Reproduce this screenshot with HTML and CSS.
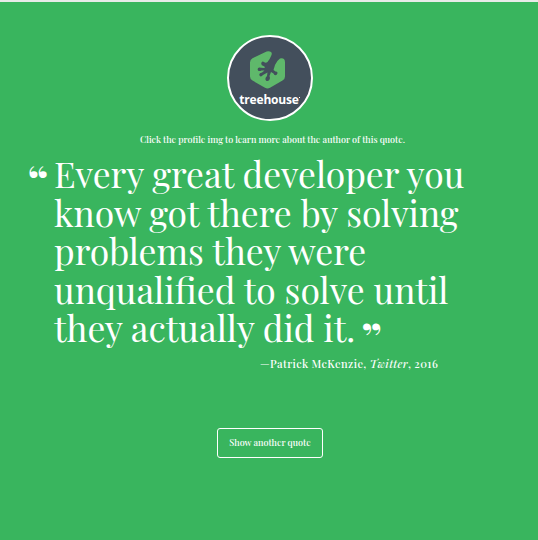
FILE: index.html
```html
<!DOCTYPE html>
<html lang="en">
<head>
<meta charset="utf-8">
<title>Quotes</title>
<link rel="stylesheet" href="styles.css">
</head>
<body>
<main class="page">
  <a class="profile" href="#" aria-label="Treehouse">
    <svg class="mark" viewBox="0 0 36 40" aria-hidden="true">
      <path fill="#5fb86b" d="M15.5 2.2Q18 .6 20.5 1.4Q23 2.2 22 5Q20.5 9 18 12Q16 13.5 14.5 12Q13 11 12 12.5Q11 15 14 16Q17 17.5 14 18L9.5 17.5Q7.5 18.5 8.5 20.5Q10 21.5 12 20.5L15 20.5L12.5 22.5Q9 23 10 25.5Q11.500 27.500 13.500 25L18 22.500L17.500 26Q14.500 29 17 31Q20 31.500 20.500 28L20 26L21.500 22L24 23.500Q25 26.500 27.500 24.500Q29 21.500 26 21.500L24 20L25.500 15Q27 11 30.500 8.500Q35.500 7.500 35.500 12.500V26.500Q35.500 29.200 33 30.600L20.500 37.800Q18 39 15.500 37.800L3 30.600Q.5 29.200.5 26.500V12.500Q.5 9.800 3 8.300Z"/>
    </svg>
    <span class="brand">treehouse<i class="dot"></i></span>
  </a>
  <p class="hint">Click the profile img to learn more about the author of this quote.</p>
  <blockquote class="quote">
    <span class="mark-open">“</span>
    <span class="line">Every great developer you</span>
    <span class="line">know got there by solving</span>
    <span class="line">problems they were</span>
    <span class="line">unqualified to solve until</span>
    <span class="line">they actually did it. <span class="mark-close">”</span></span>
  </blockquote>
  <p class="source">—Patrick McKenzie, <em>Twitter</em>, 2016</p>
  <button class="next" type="button"><span>Show another quote</span></button>
</main>
</body>
</html>
```
FILE: styles.css
```css
* { box-sizing: border-box; }
body {
  margin: 0;
  background: #39b55e;
  color: #fff;
  font-family: "Playfair Display", "Liberation Serif", serif;
}
.page {
  height: 540px;
  border-top: 2px solid #e8ebe9;
  padding-top: 33px;
  overflow: hidden;
}
.profile {
  display: flex;
  flex-direction: column;
  align-items: center;
  width: 86px;
  height: 86px;
  margin: 0 0 0 226.5px;
  padding-top: 13px;
  border: 2px solid #fff;
  border-radius: 50%;
  background: #434f5c;
  color: #fff;
  text-decoration: none;
}
.mark { width: 37px; height: 40px; flex: none; margin-right: 4px; }
.brand {
  display: flex;
  margin-top: 2px;
  font: 700 12px/16px "Open Sans", sans-serif;
  letter-spacing: -0.2px;
}
.dot { width: 1px; height: 1px; margin-top: 5px; background: #fff; }
.hint {
  margin: 11px 0 0 140px;
  font-size: 9px;
  font-weight: 500;
  line-height: 14px;
  white-space: nowrap;
  color: #fff;
}
.quote {
  position: relative;
  margin: 9px 0 0 54px;
  font-size: 35.5px;
  line-height: 38.5px;
}
.line { display: block; white-space: nowrap; }
.mark-open, .mark-close { font-weight: 900; font-size: 40px; line-height: 0; }
.mark-open { position: absolute; left: -26px; top: 24px; }
.mark-close { position: relative; top: 10px; margin-left: -2px; }
.source {
  margin: 8px 0 0 260px;
  font-size: 11px;
  font-weight: 500;
  line-height: 16px;
  white-space: nowrap;
  letter-spacing: 0.4px;
  color: #fff;
}
.next {
  display: flex;
  align-items: center;
  justify-content: center;
  width: 106px;
  height: 30px;
  margin: 56px 0 0 217px;
  padding: 0 0 2px;
  border: 1px solid #fff;
  border-radius: 3px;
  background: none;
  color: #fff;
  font: 500 9px/14px "Playfair Display", "Liberation Serif", serif;
  white-space: nowrap;
}
```
